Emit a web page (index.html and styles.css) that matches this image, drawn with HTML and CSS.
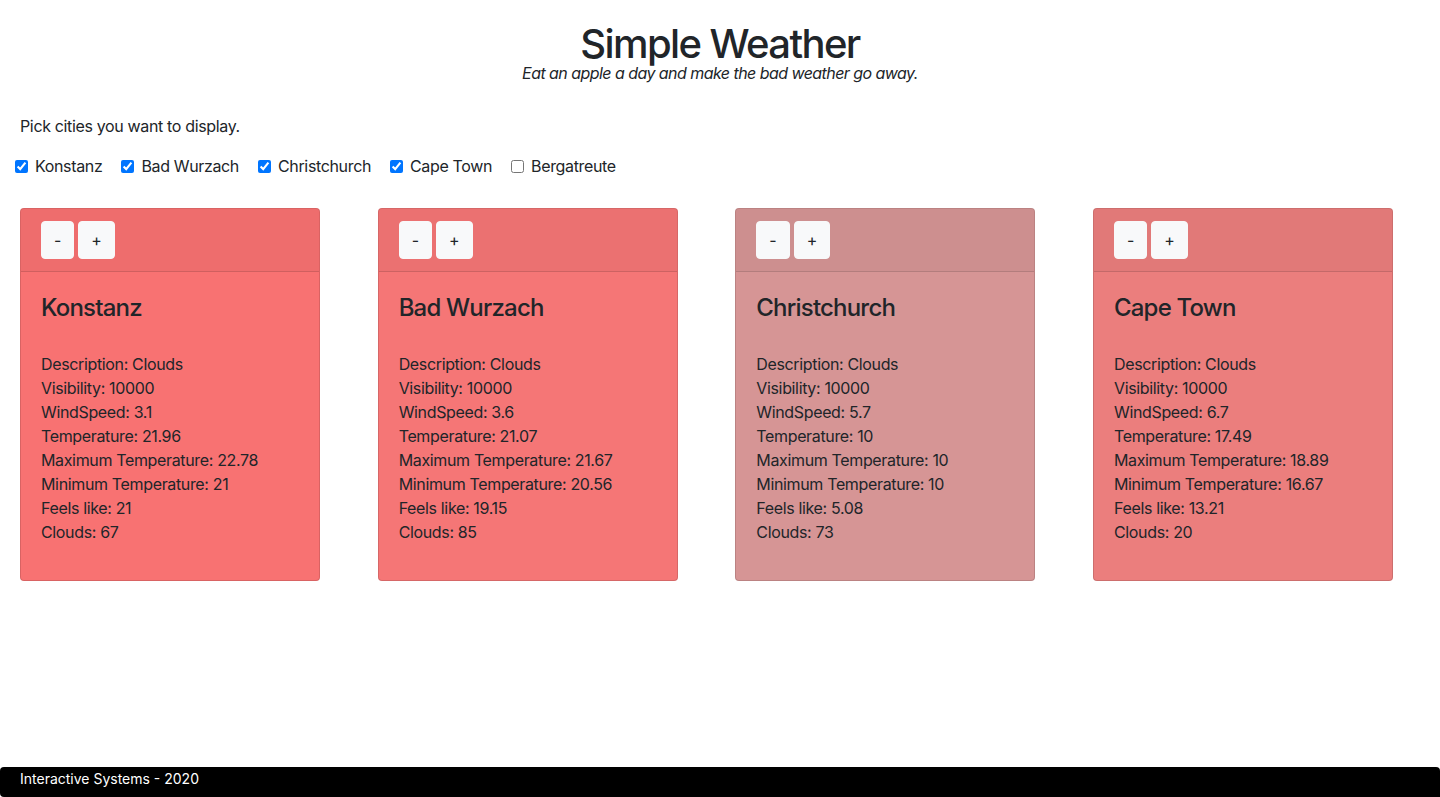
FILE: index.html
```html
<!DOCTYPE html>
<html>
<head>
<meta charset="utf-8">
<link rel="stylesheet" href="styles.css">
</head>
<body>
<header class="hero">
  <h1 class="title">Simple Weather</h1>
  <p class="tagline">Eat an apple a day and make the bad weather go away.</p>
</header>
<main class="main">
  <p class="pick">Pick cities you want to display.</p>
  <div class="cities">
    <label class="city"><input type="checkbox" checked> Konstanz</label>
    <label class="city"><input type="checkbox" checked> Bad Wurzach</label>
    <label class="city"><input type="checkbox" checked> Christchurch</label>
    <label class="city"><input type="checkbox" checked> Cape Town</label>
    <label class="city"><input type="checkbox"> Bergatreute</label>
  </div>
  <div class="cards">
    <div class="card c1">
      <div class="card-header"><button class="btn">-</button><button class="btn">+</button></div>
      <div class="card-body">
        <h4 class="card-title">Konstanz</h4>
        <p class="info">Description: Clouds<br>Visibility: 10000<br>WindSpeed: 3.1<br>Temperature: 21.96<br>Maximum Temperature: 22.78<br>Minimum Temperature: 21<br>Feels like: 21<br>Clouds: 67</p>
      </div>
    </div>
    <div class="card c2">
      <div class="card-header"><button class="btn">-</button><button class="btn">+</button></div>
      <div class="card-body">
        <h4 class="card-title">Bad Wurzach</h4>
        <p class="info">Description: Clouds<br>Visibility: 10000<br>WindSpeed: 3.6<br>Temperature: 21.07<br>Maximum Temperature: 21.67<br>Minimum Temperature: 20.56<br>Feels like: 19.15<br>Clouds: 85</p>
      </div>
    </div>
    <div class="card c3">
      <div class="card-header"><button class="btn">-</button><button class="btn">+</button></div>
      <div class="card-body">
        <h4 class="card-title">Christchurch</h4>
        <p class="info">Description: Clouds<br>Visibility: 10000<br>WindSpeed: 5.7<br>Temperature: 10<br>Maximum Temperature: 10<br>Minimum Temperature: 10<br>Feels like: 5.08<br>Clouds: 73</p>
      </div>
    </div>
    <div class="card c4">
      <div class="card-header"><button class="btn">-</button><button class="btn">+</button></div>
      <div class="card-body">
        <h4 class="card-title">Cape Town</h4>
        <p class="info">Description: Clouds<br>Visibility: 10000<br>WindSpeed: 6.7<br>Temperature: 17.49<br>Maximum Temperature: 18.89<br>Minimum Temperature: 16.67<br>Feels like: 13.21<br>Clouds: 20</p>
      </div>
    </div>
  </div>
</main>
<footer class="footer">Interactive Systems - 2020</footer>
</body>
</html>
```
FILE: styles.css
```css
* { box-sizing: border-box; }
html, body { height: 100%; }
body {
  margin: 0;
  font-family: Inter, "Noto Sans", sans-serif;
  font-size: 16px;
  line-height: 1.5;
  letter-spacing: -0.35px;
  color: #212529;
  background: #fff;
  display: flex;
  flex-direction: column;
}
.hero {
  text-align: center;
  padding-top: 24px;
}
.title {
  margin: 0;
  font-size: 40px;
  font-weight: 500;
  line-height: 1;
  letter-spacing: -1.6px;
}
.tagline {
  margin: 1px 0 0;
  font-style: italic;
  font-size: 16px;
  line-height: 16px;
  letter-spacing: -0.55px;
}
.main {
  flex: 1;
  padding: 0 20px;
}
.pick {
  margin: 33px 0 0;
}
.cities {
  display: flex;
  gap: 19px;
  margin: 16px 0 0 -5px;
}
.city {
  display: flex;
  align-items: center;
  gap: 4px;
}
.city input {
  margin: 0 3px 0 0;
  width: 13px;
  height: 13px;
}
.cards {
  display: grid;
  grid-template-columns: repeat(4, 300px);
  column-gap: 57.67px;
  margin-top: 30px;
}
.card {
  border: 1px solid rgba(0,0,0,.125);
  border-radius: 4px;
  overflow: hidden;
}
.c1 { background: #f87272; }
.c2 { background: #f57676; }
.c3 { background: #d69595; }
.c4 { background: #eb7e7d; }
.card-header {
  padding: 12px 20px;
  background: rgba(0,0,0,.04);
  border-bottom: 1px solid rgba(0,0,0,.125);
  display: flex;
  gap: 4px;
}
.btn {
  font-family: inherit;
  font-size: 16px;
  line-height: 1.5;
  color: #212529;
  background: #f8f9fa;
  border: 1px solid #f8f9fa;
  border-radius: 4px;
  padding: 6px 12px;
  height: 38px;
}
.card-body {
  padding: 22px 20px 20px;
}
.card-title {
  margin: 0 0 29px;
  font-size: 24px;
  font-weight: 500;
  line-height: 1.2;
  letter-spacing: -0.8px;
}
.info {
  margin: 0 0 16px;
}
.footer {
  background: #000;
  color: #fff;
  font-size: 14px;
  line-height: 1.5;
  letter-spacing: 0;
  padding: 1px 20px 5px;
  height: 30px;
  border-radius: 4px 4px 0 4px;
}
```
